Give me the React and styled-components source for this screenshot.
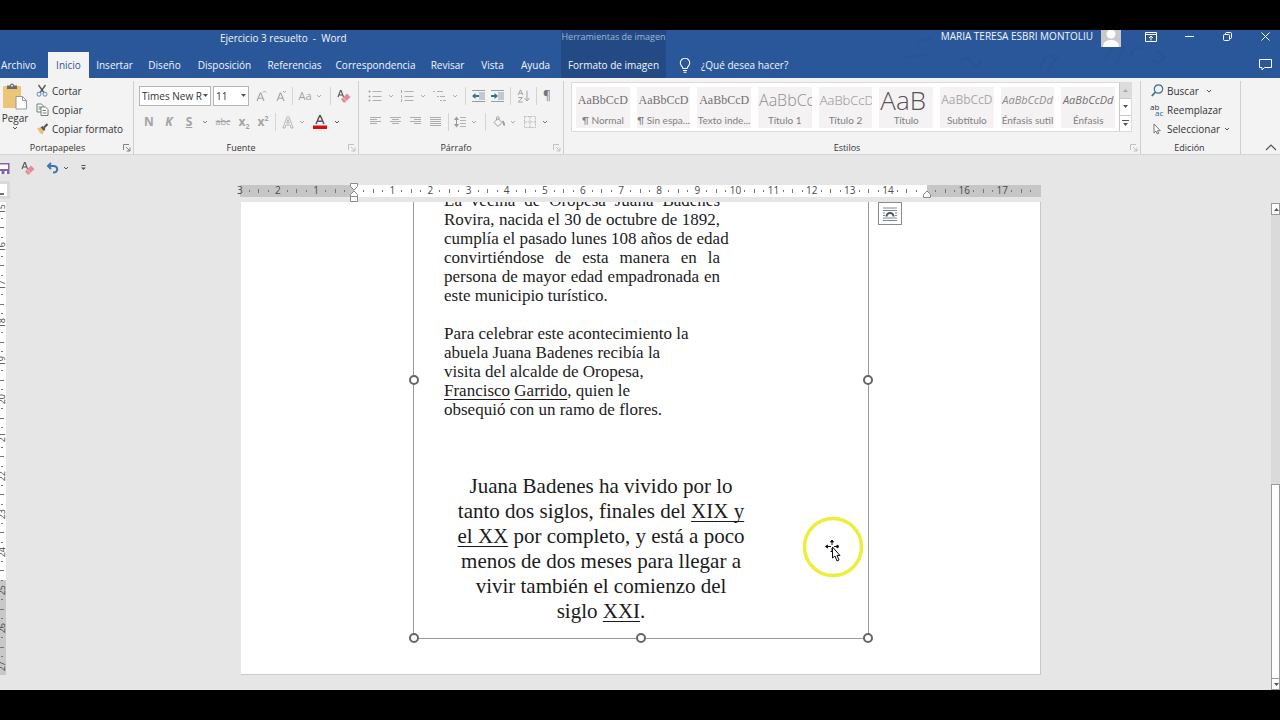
import React from "react";
import styled, { createGlobalStyle, css } from "styled-components";

const GlobalStyle = createGlobalStyle`
  * { box-sizing: border-box; }
  body {
    margin: 0;
    background: #000;
    font-family: "Open Sans", "Noto Sans", sans-serif;
    font-size: 10px;
    line-height: 16px;
    color: #333;
  }
  button, select { font: inherit; color: inherit; }
  button { background: none; border: 0; padding: 0; cursor: pointer; white-space: nowrap; }
  h1, h2, p { margin: 0; font-weight: 400; }
  svg { display: block; flex: none; }
`;

const Screen = styled.div`
  display: flex;
  flex-direction: column;
  min-height: 100vh;
  padding: 30px 0;
  overflow: hidden;
`;

/* ---------- header ---------- */
const Header = styled.header`
  position: relative;
  background: #2a579a;
  color: #f2f6fb;
`;
const Doodle = styled.svg`
  position: absolute;
  top: 0;
  right: 100px;
`;
const TitleRow = styled.div`
  position: relative;
  display: flex;
  height: 22px;
`;
const DocTitle = styled.h1`
  width: 561px;
  padding-left: 220px;
  font-size: 10px;
  line-height: 16px;
  white-space: pre;
`;
const ContextLabel = styled.div`
  width: 105px;
  background: #234a84;
  color: #9fb6d8;
  font-size: 9px;
  line-height: 13px;
  text-align: center;
  white-space: nowrap;
`;
const UserArea = styled.div`
  display: flex;
  align-items: flex-start;
  gap: 8px;
  margin-left: auto;
  line-height: 13px;
`;
const Avatar = styled.svg`
  margin-right: 7px;
`;
const WindowButton = styled.button`
  display: flex;
  justify-content: center;
  align-items: center;
  width: 30px;
  height: 13px;
`;
const TabRow = styled.nav`
  position: relative;
  display: flex;
  align-items: center;
  height: 26px;
`;
const Tab = styled.button`
  width: ${(p) => p.$w}px;
  height: 26px;
  text-align: center;
  margin-right: ${(p) => p.$after || 0}px;
  ${(p) => p.$active && css`background: #f3f3f3; color: #2a579a;`}
  ${(p) => p.$context && css`background: #234a84;`}
`;
const TellMe = styled.button`
  display: flex;
  align-items: center;
  gap: 10px;
  margin-left: 13px;
`;
const CommentButton = styled(WindowButton)`
  margin-left: auto;
  height: 20px;
`;

/* ---------- ribbon ---------- */
const Ribbon = styled.div`
  display: flex;
  height: 77px;
  padding: 3px 0 0;
  background: #f3f3f3;
  border-bottom: 1px solid #d5d5d5;
`;
const Group = styled.section`
  display: flex;
  flex-direction: column;
  ${(p) => (p.$w ? `width: ${p.$w}px;` : "flex: 1; min-width: 0;")}
  margin-left: ${(p) => p.$bleed || 0}px;
  border-right: 1px solid #cfcfcf;
`;
const GroupBody = styled.div`
  display: flex;
  flex: 1;
  padding: ${(p) => p.$pad || "0"};
  flex-direction: ${(p) => (p.$column ? "column" : "row")};
`;
const GroupFoot = styled.div`
  display: flex;
  align-items: center;
  height: 12px;
  padding-right: 2px;
`;
const GroupName = styled.h2`
  flex: 1;
  font-size: 9px;
  line-height: 12px;
  text-align: center;
`;
const Row = styled.div`
  display: flex;
  align-items: center;
  height: ${(p) => p.$h}px;
`;
const Tool = styled.button`
  display: flex;
  justify-content: center;
  align-items: center;
  width: ${(p) => p.$w}px;
  height: 18px;
  color: ${(p) => p.$color || "#a3a3a3"};
  font-size: ${(p) => p.$size || 12}px;
  font-weight: ${(p) => (p.$bold ? 700 : 400)};
  font-style: ${(p) => (p.$italic ? "italic" : "normal")};
  text-decoration: ${(p) => p.$line || "none"};
  & sup, & sub { font-size: 7px; line-height: 0; }
`;
const SepBox = styled.span`
  display: flex;
  justify-content: center;
  width: ${(p) => p.$w}px;
  &::before { content: ""; width: 1px; height: 18px; background: #d4d4d4; }
`;
const PasteButton = styled.button`
  display: flex;
  flex-direction: column;
  align-items: center;
  width: 30px;
  margin-right: 6px;
  padding-top: 2px;
`;
const Command = styled.button`
  display: flex;
  align-items: center;
  gap: 4px;
  height: 19px;
`;
const CommandList = styled.div`
  display: flex;
  flex-direction: column;
  align-items: flex-start;
`;
const IconBox = styled.span`
  display: flex;
  justify-content: center;
  width: 12px;
`;
const CaretGap = styled.span`
  margin-left: ${(p) => p.$gap}px;
`;
const SelectBox = styled.label`
  position: relative;
  width: ${(p) => p.$w}px;
  height: 20px;
  margin-right: 2px;
  & select {
    width: 100%;
    height: 20px;
    padding: 0 0 0 2px;
    appearance: none;
    background: #fff;
    border: 1px solid #b5b5b5;
    border-radius: 0;
  }
  & svg { position: absolute; right: 3px; top: 8px; }
`;

/* ---------- styles gallery ---------- */
const Gallery = styled.div`
  display: flex;
  flex: 1;
  min-width: 0;
  height: 50px;
  background: #fff;
  border: 1px solid #dcdcdc;
`;
const Cards = styled.div`
  display: flex;
  flex: 1;
  min-width: 0;
  gap: 7px;
  padding: 4px;
`;
const Card = styled.button`
  display: flex;
  flex-direction: column;
  flex: 1 1 0;
  min-width: 0;
  height: 41px;
  overflow: hidden;
  background: #f5f2f4;
`;
const Sample = styled.span`
  display: flex;
  justify-content: ${(p) => (p.$wide ? "flex-start" : "center")};
  align-items: center;
  width: 100%;
  height: 26px;
  padding-left: ${(p) => (p.$wide ? 1 : 0)}px;
  overflow: hidden;
  font-family: ${(p) => (p.$serif ? '"Liberation Serif", serif' : '"Open Sans", sans-serif')};
  font-size: ${(p) => p.$size}px;
  font-weight: ${(p) => (p.$light ? 300 : 400)};
  font-style: ${(p) => (p.$italic ? "italic" : "normal")};
  line-height: 26px;
  color: ${(p) => p.$color || "#707070"};
`;
const CardName = styled.span`
  width: 100%;
  height: 15px;
  font-family: Lato, sans-serif;
  line-height: 15px;
  text-align: center;
  color: #808080;
`;
const GalleryNav = styled.div`
  display: flex;
  flex-direction: column;
  width: 12px;
  border-left: 1px solid #c9c9c9;
`;
const GalleryButton = styled.button`
  display: flex;
  flex: 1;
  justify-content: center;
  align-items: center;
  background: ${(p) => (p.$off ? "#dcdcdc" : "#fff")};
  & + & { border-top: 1px solid #c9c9c9; }
`;
const RibbonEnd = styled.div`
  display: flex;
  justify-content: flex-end;
  align-items: flex-end;
  width: 39px;
  padding: 0 3px 3px 0;
`;

/* ---------- workspace ---------- */
const Workspace = styled.main`
  display: flex;
  flex-direction: column;
  flex: 1;
  background: #e6e6e6;
`;
const QuickAccess = styled.div`
  display: flex;
  align-items: center;
  height: 26px;
`;
const Body = styled.div`
  display: flex;
  flex: 1;
`;
const Rail = styled.div`
  width: 10px;
`;
const TabSelector = styled.button`
  display: block;
  width: 10px;
  height: 18px;
  margin-bottom: 3px;
  background: #fff;
  border: 3px solid #d9d9d9;
  border-left: 0;
`;
const VRuler = styled.div`
  display: flex;
  flex-direction: column;
  width: 6px;
  height: 473px;
  padding: 2px 0 4px;
  overflow: hidden;
  background: linear-gradient(#fff 80%, #c8c8c8 80%);
`;
const VSlot = styled.span`
  display: flex;
  flex: 1 1 0;
  justify-content: flex-end;
  align-items: center;
  min-height: 0;
  padding-right: ${(p) => (p.$num ? 0 : p.$tick ? 2 : 3)}px;
  font-size: 9px;
  line-height: 8px;
  color: #444;
  & > b { font-weight: 400; writing-mode: vertical-rl; transform: rotate(180deg); }
  & > i { width: ${(p) => (p.$tick ? 4 : 2)}px; height: 1px; background: #777; }
`;
const Center = styled.div`
  display: flex;
  flex-direction: column;
  align-items: center;
  flex: 1;
  padding-top: 4px;
`;
const HRuler = styled.div`
  position: relative;
  display: flex;
  width: 801px;
  height: 12px;
  margin-bottom: 5px;
  background: linear-gradient(90deg, #c6c6c6 14.28%, #fff 14.28%, #fff 85.72%, #c6c6c6 85.72%);
`;
const Scale = styled.div`
  display: flex;
  width: 100%;
  margin: 0 5px 0 -5px;
  padding-bottom: 1px;
  flex: none;
`;
const HSlot = styled.span`
  display: flex;
  flex: 1 1 0;
  justify-content: center;
  align-items: center;
  min-width: 0;
  line-height: 11px;
  color: #4a4a4a;
  & > i { width: 1px; height: ${(p) => (p.$tick ? 4 : 2)}px; background: #777; }
`;
const Marker = styled.svg`
  position: absolute;
  left: ${(p) => p.$at};
  top: ${(p) => p.$top}px;
  transform: translateX(-50%);
`;
const Viewport = styled.div`
  overflow: hidden;
  padding: 0 0 4px 1px;
`;
const Paper = styled.article`
  position: relative;
  width: 800px;
  padding: 0 171px 35px 172px;
  background: #fff;
  border-right: 1px solid #c9c9c9;
  border-bottom: 1px solid #c9c9c9;
`;
const Picture = styled.div`
  position: relative;
  display: flow-root;
  padding: 0 120px 14px 30px;
  border: 1px solid #9a9a9a;
  border-top: 0;
  color: #1b1b1b;
  font-family: "Liberation Serif", serif;
`;
const Handle = styled.button`
  position: absolute;
  left: ${(p) => p.$x};
  top: ${(p) => p.$y};
  width: 10px;
  height: 10px;
  margin: -5px;
  background: #fff;
  border: 2px solid #666;
  border-radius: 50%;
`;
const Story = styled.p`
  width: 276px;
  margin-top: ${(p) => p.$top}px;
  font-size: 17px;
  line-height: 19px;
  white-space: nowrap;
  text-align: left;
`;
const Line = styled.span`
  display: block;
  text-align-last: ${(p) => (p.$fill ? "justify" : "auto")};
`;
const Closing = styled.p`
  width: 314px;
  margin: 55px 0 0;
  font-size: 21px;
  line-height: 25px;
  text-align: center;
  white-space: nowrap;
`;
const Under = styled.span`
  text-decoration: underline 1px;
  text-underline-offset: 3px;
  text-decoration-skip-ink: none;
`;
const LayoutOptions = styled.button`
  position: absolute;
  left: 637px;
  top: 0;
  display: flex;
  justify-content: center;
  align-items: center;
  width: 24px;
  height: 23px;
  background: #fff;
  border: 1px solid #8a8a8a;
`;
const Pointer = styled.svg`
  position: absolute;
  left: 561px;
  top: 314px;
`;
const ScrollBar = styled.div`
  display: flex;
  flex-direction: column;
  width: 9px;
  margin-top: 22px;
  background: #dadada;
`;
const ScrollButton = styled.button`
  display: flex;
  align-items: center;
  justify-content: flex-end;
  height: 12px;
  background: #fff;
  border: 1px solid #999;
  overflow: hidden;
`;
const ScrollThumb = styled.div`
  height: 194px;
  margin-top: auto;
  background: #fff;
  border: 1px solid #999;
  border-bottom: 0;
`;

/* ---------- icons ---------- */
const Caret = ({ c = "#555" }) => (
  <svg width="6" height="4" viewBox="0 0 6 4"><path d="M1 1l2 2 2-2" fill="none" stroke={c} /></svg>
);
const Solid = ({ up, c = "#555" }) => (
  <svg width="5" height="3" viewBox="0 0 5 3"><path d={up ? "M0 3h5L2.500 0z" : "M0 0h5L2.500 3z"} fill={c} /></svg>
);
const Launcher = ({ c = "#777" }) => (
  <svg width="8" height="8" viewBox="0 0 8 8" fill="none" stroke={c} strokeWidth=".8"><path d="M.5 6V.5H6M3 3l4 4M7 3.500V7H3.500" /></svg>
);
const GrowA = ({ down }) => (
  <svg width="11" height="12" viewBox="0 0 11 12" fill="none" stroke="#a3a3a3">
    <path d="M1 11l3.200-8h.6L8 11M2.200 8.300h4.600" strokeWidth="1.100" /><path d={down ? "M7 1l1.500 1.500L10 1" : "M7 2.500L8.500 1 10 2.500"} />
  </svg>
);
const Eraser = () => (
  <svg width="14" height="14" viewBox="0 0 14 14">
    <path d="M1 8L3.500 1.500h.6L6.500 8M2 6h3.500" fill="none" stroke="#555" strokeWidth="1.100" />
    <path d="M4 10.500l6-6L13.500 8 8 13.500H6.500z" fill="#e58a9b" />
    <path d="M6 8.500l3.500 3.500" stroke="#f6cdd4" strokeWidth=".8" />
  </svg>
);
const Paste = () => (
  <svg width="26" height="27" viewBox="0 0 26 27">
    <rect x="1" y="3" width="18" height="22" rx="1" fill="#ecc678" />
    <path d="M5 2.500h3a2 2 0 014 0h3V6H5z" fill="#6b6b6b" /><circle cx="10" cy="2.800" r="1" fill="#eee" />
    <path d="M14 13.500h6.500l4 4V26H14z" fill="#fff" stroke="#999" /><path d="M20.500 13.500v4h4" fill="none" stroke="#999" />
  </svg>
);
const Cut = () => (
  <svg width="12" height="13" viewBox="0 0 12 13" fill="none">
    <path d="M2.500 1l5.300 7.500M9.500 1L4.200 8.500" stroke="#555" strokeWidth="1.300" />
    <circle cx="3" cy="10.200" r="2" stroke="#5b87b8" /><circle cx="9" cy="10.200" r="2" stroke="#5b87b8" />
  </svg>
);
const Copy = () => (
  <svg width="13" height="13" viewBox="0 0 13 13" fill="#fff" stroke="#6f8078">
    <path d="M1 1h4.500L8 3.500V9H1z" /><path d="M2.500 4h3M2.500 6h3" />
    <path d="M5 4h4.500L12 6.500v6H5z" /><path d="M6.500 7.500h3.500M6.500 10h4" />
  </svg>
);
const Brush = () => (
  <svg width="12" height="12" viewBox="0 0 12 12">
    <path d="M1 5l3.500-.5L8 8l-1.500 3.500L4 10z" fill="#edc06b" /><path d="M4.500 4.500l2-1.500 3 3-1.500 2z" fill="#555" /><path d="M8 4.500L11.500 1" stroke="#555" strokeWidth="2" />
  </svg>
);
const List = ({ kind }) => (
  <svg width="14" height="12" viewBox="0 0 14 12" stroke="#b0b0b0" fill="#a0a0a0">
    {[1.5, 6.5, 10.5].map((y, i) => (
      <g key={y}>
        {kind === "multi" ? (
          <path d={`M${[0, 4, 7][i]} ${y}h2M${[4, 7, 10][i]} ${y}h${[6, 5, 3][i]}`} />
        ) : kind === "num" ? (
          <path d={`M1.500 ${y - 1.5}v3M4.500 ${y}h9`} />
        ) : (
          <><circle cx="1.500" cy={y} r="1" stroke="none" /><path d={`M4.500 ${y}h9`} /></>
        )}
      </g>
    ))}
  </svg>
);
const Indent = ({ out }) => (
  <svg width="13" height="12" viewBox="0 0 13 12">
    <path d="M0 .5h13M7 3h6M7 5h6M7 7h6M7 9h6M0 11.500h13" stroke="#8fa0a6" />
    <path d={out ? "M0 6l3.500-3v2H7v2H3.500v2z" : "M7 6L3.500 3v2H0v2h3.500v2z"} fill="#3d7187" />
  </svg>
);
const Align = ({ rows }) => (
  <svg width="11" height="10" viewBox="0 0 11 10" stroke="#adadad">
    {rows.map(([a, b], i) => <path key={i} d={`M${a} ${i * 2 + 0.5}H${b}`} />)}
  </svg>
);
const Sort = () => (
  <svg width="13" height="14" viewBox="0 0 13 14" fill="none" stroke="#a3a3a3">
    <path d="M1 6L3.500.8 6 6M2 4.300h3M1.200 8.500h4.300L1.200 13h4.600M10 1.500v10M7.500 9l2.500 3 2.500-3" />
  </svg>
);
const Spacing = () => (
  <svg width="12" height="12" viewBox="0 0 12 12">
    <path d="M2.500 1v10" stroke="#999" /><path d="M0 4l2.500-3.500L5 4zM0 8l2.500 3.500L5 8z" fill="#999" />
    <path d="M6 1.500h6M6 4.500h6M6 7.500h6M6 10.500h6" stroke="#b3b3b3" />
  </svg>
);
const Bucket = () => (
  <svg width="12" height="12" viewBox="0 0 12 12" fill="none" stroke="#9e9e9e">
    <path d="M1 6.500l4-4 4 4-4 4zM3.500 4V1.500a1.300 1.300 0 012.500 0V4" /><path d="M9.500 5c1.500 2 2 3 1.300 4.500" strokeWidth="2" />
  </svg>
);
const Borders = () => (
  <svg width="12" height="12" viewBox="0 0 12 12" fill="none" stroke="#bbb"><path d="M.5.5h11v11H.5zM6 .5v11M.5 6h11" strokeDasharray="2 1" /></svg>
);
const OutlineA = () => (
  <svg width="12" height="13" viewBox="0 0 12 13" fill="none" stroke="#b0b0b0" strokeWidth=".9"><path d="M.8 12L5 1h2l4.200 11H9L8 9H4l-1 3zM4.700 7h2.600L6 3.500z" /></svg>
);
const Search = () => (
  <svg width="13" height="13" viewBox="0 0 13 13" fill="none" stroke="#3b6c9e"><circle cx="7.500" cy="5" r="4.200" strokeWidth="1.200" /><path d="M4.500 8L.8 12" strokeWidth="1.800" /></svg>
);
const Arrow = () => (
  <svg width="8" height="12" viewBox="0 0 8 12" fill="#fff" stroke="#777"><path d="M1 1v9l2-1.800L4.300 11l1.400-.6-1.200-2.700H7.300z" /></svg>
);
const ReplaceIcon = styled.span`
  display: flex;
  flex-direction: column;
  width: 14px;
  margin: 0 -1px;
  font-size: 8px;
  line-height: 6px;
  text-align: left;
  & > b { padding-left: 5px; font-weight: 400; color: #33658f; }
`;

const ruler = (from, to) => {
  const out = [];
  for (let n = from; n < to; n += 1) out.push(String(Math.abs(n)), "dot", "tick", "dot");
  return out;
};
const horizontal = ruler(-3, 18).map((s) => (s === "0" || s === "15" ? "" : s));
const vertical = ruler(15, 28).slice(0, 49);

const tabs = [
  ["Archivo", 37, 11], ["Inicio", 41], ["Insertar", 51], ["Diseño", 49], ["Disposición", 71],
  ["Referencias", 69], ["Correspondencia", 93], ["Revisar", 51], ["Vista", 39], ["Ayuda", 47, 2],
  ["Formato de imagen", 105],
];

const styles = [
  ["¶ Normal", "AaBbCcD", { $serif: true, $size: 12 }],
  ["¶ Sin espa...", "AaBbCcD", { $serif: true, $size: 12 }],
  ["Texto inde...", "AaBbCcD", { $serif: true, $size: 12 }],
  ["Título 1", "AaBbCc", { $size: 16, $light: true, $wide: true, $color: "#8f8f8f" }],
  ["Título 2", "AaBbCcD", { $size: 13, $light: true, $wide: true, $color: "#8f8f8f" }],
  ["Título", "AaB", { $size: 26, $light: true, $wide: true, $color: "#555" }],
  ["Subtítulo", "AaBbCcD", { $size: 12, $color: "#aaa" }],
  ["Énfasis sutil", "AaBbCcDd", { $size: 11, $italic: true, $color: "#8d8d8d" }],
  ["Énfasis", "AaBbCcDd", { $size: 11, $italic: true, $color: "#707070" }],
];

const handles = [["0%", "178px"], ["100%", "178px"], ["0%", "100%"], ["50%", "100%"], ["100%", "100%"]];

const Foot = ({ name, dialog, dim }) => (
  <GroupFoot>
    <GroupName>{name}</GroupName>
    {dialog && <button aria-label={`Opciones de ${name}`}><Launcher c={dim ? "#b5b5b5" : "#666"} /></button>}
  </GroupFoot>
);

export default function App() {
  return (
    <Screen>
      <GlobalStyle />
      <Header>
        <Doodle width="300" height="48" viewBox="0 0 300 48" fill="none" stroke="#234e8c" strokeOpacity=".3" strokeWidth="2" aria-hidden="true">
          <path d="M38 12l14-5M25 28l22-4M80 32q6-8 12 0t10-2M160 38q4-14 14-12M168 40l10-14M225 30l8-14M236 34l8-18M250 26q6-12 16-6M276 20l10 8M272 30q8 6 14-4" />
        </Doodle>
        <TitleRow>
          <DocTitle>Ejercicio 3 resuelto  -  Word</DocTitle>
          <ContextLabel>Herramientas de imagen</ContextLabel>
          <UserArea>
            <span>MARIA TERESA ESBRI MONTOLIU</span>
            <Avatar width="20" height="17" viewBox="0 0 20 17">
              <path fill="#c9c9c9" d="M0 0h20v17H0z" /><circle cx="10" cy="4" r="4.500" fill="#fff" /><path d="M2 17c0-5 3-7 8-7s8 2 8 7z" fill="#fff" />
            </Avatar>
            <WindowButton aria-label="Opciones de la cinta">
              <svg width="12" height="10" viewBox="0 0 12 10" fill="none" stroke="#fff"><path d="M.5.5h11v9H.5zM.5 2.500h11M6 8.500V4.500M4 6l2-2 2 2" /></svg>
            </WindowButton>
            <WindowButton aria-label="Minimizar"><svg width="9" height="2" viewBox="0 0 9 2"><path d="M0 .5h9" stroke="#fff" /></svg></WindowButton>
            <WindowButton aria-label="Restaurar">
              <svg width="9" height="9" viewBox="0 0 9 9" fill="none" stroke="#fff"><rect x=".5" y="2.500" width="6" height="6" rx="1" /><path d="M2.500 2.500v-1q0-1 1-1h4q1 0 1 1v4q0 1-1 1h-1" /></svg>
            </WindowButton>
            <WindowButton aria-label="Cerrar"><svg width="9" height="9" viewBox="0 0 9 9"><path d="M.5.5l8 8M8.500.5l-8 8" stroke="#fff" /></svg></WindowButton>
          </UserArea>
        </TitleRow>
        <TabRow>
          {tabs.map(([t, w, after], i) => (
            <Tab key={t} $w={w} $after={after} $active={i === 1} $context={i === 10}>{t}</Tab>
          ))}
          <TellMe>
            <svg width="12" height="15" viewBox="0 0 12 15" fill="none" stroke="#fff" strokeWidth="1.100"><path d="M4 10.500C4 8.500 1.300 8 1.300 5a4.700 4.700 0 019.400 0c0 3-2.700 3.500-2.700 5.500zM4 12.500h4M4.500 14.200h3" /></svg>
            ¿Qué desea hacer?
          </TellMe>
          <CommentButton aria-label="Comentarios">
            <svg width="13" height="12" viewBox="0 0 13 12" fill="none" stroke="#fff"><path d="M.5.5h12v8H5.500L3 11V8.500H.5z" /></svg>
          </CommentButton>
        </TabRow>
      </Header>

      <Ribbon>
        <Group $w={142} $bleed={-8}>
          <GroupBody $pad="0 0 0 8px">
            <PasteButton><Paste />Pegar<Caret /></PasteButton>
            <CommandList>
              <Command><IconBox><Cut /></IconBox>Cortar</Command>
              <Command><IconBox><Copy /></IconBox>Copiar</Command>
              <Command><IconBox><Brush /></IconBox>Copiar formato</Command>
            </CommandList>
          </GroupBody>
          <Foot name="Portapapeles" dialog />
        </Group>

        <Group $w={225}>
          <GroupBody $column $pad="2px 0 0 5px">
            <Row $h={26}>
              <SelectBox $w={72}>
                <select aria-label="Fuente" defaultValue="t"><option value="t">Times New R</option></select><Solid />
              </SelectBox>
              <SelectBox $w={36}>
                <select aria-label="Tamaño de fuente" defaultValue="11"><option>11</option></select><Solid />
              </SelectBox>
              <Tool $w={20} aria-label="Aumentar tamaño"><GrowA /></Tool>
              <Tool $w={20} aria-label="Disminuir tamaño"><GrowA down /></Tool>
              <SepBox $w={3} />
              <Tool $w={22} $size={11}>Aa</Tool>
              <Tool $w={6} aria-label="Más opciones de mayúsculas"><Caret c="#b0b0b0" /></Tool>
              <SepBox $w={16} />
              <Tool $w={12} aria-label="Borrar formato"><Eraser /></Tool>
            </Row>
            <Row $h={26}>
              <Tool $w={20} $bold>N</Tool>
              <Tool $w={20} $bold $italic>K</Tool>
              <Tool $w={20} $bold $line="underline">S</Tool>
              <Tool $w={12} aria-label="Tipos de subrayado"><Caret c="#888" /></Tool>
              <Tool $w={24} $size={9} $line="line-through">abc</Tool>
              <Tool $w={18} $bold><span>x<sub>2</sub></span></Tool>
              <Tool $w={20} $bold><span>x<sup>2</sup></span></Tool>
              <SepBox $w={5} />
              <Tool $w={20} aria-label="Efectos de texto"><OutlineA /></Tool>
              <Tool $w={8} aria-label="Más efectos"><Caret c="#b0b0b0" /></Tool>
              <Tool $w={28} aria-label="Color de fuente">
                <svg width="14" height="14" viewBox="0 0 14 14"><path d="M3 9L6.600.8h.8L11 9M4.500 6.300h5" fill="none" stroke="#555" strokeWidth="1.500" /><path d="M0 10.500h14V14H0z" fill="#d90b10" /></svg>
              </Tool>
              <Tool $w={6} aria-label="Más colores"><Caret /></Tool>
            </Row>
          </GroupBody>
          <Foot name="Fuente" dialog dim />
        </Group>

        <Group $w={205}>
          <GroupBody $column $pad="2px 0 0 6px">
            <Row $h={26}>
              <Tool $w={20} aria-label="Viñetas"><List /></Tool>
              <Tool $w={12} aria-label="Más viñetas"><Caret c="#b0b0b0" /></Tool>
              <Tool $w={20} aria-label="Numeración"><List kind="num" /></Tool>
              <Tool $w={12} aria-label="Más numeración"><Caret c="#b0b0b0" /></Tool>
              <Tool $w={22} aria-label="Lista multinivel"><List kind="multi" /></Tool>
              <Tool $w={8} aria-label="Más niveles"><Caret c="#b0b0b0" /></Tool>
              <SepBox $w={12} />
              <Tool $w={14} aria-label="Disminuir sangría"><Indent out /></Tool>
              <Tool $w={24} aria-label="Aumentar sangría"><Indent /></Tool>
              <SepBox $w={2} />
              <Tool $w={24} aria-label="Ordenar"><Sort /></Tool>
              <SepBox $w={2} />
              <Tool $w={20} $color="#777">¶</Tool>
            </Row>
            <Row $h={26}>
              <Tool $w={20} aria-label="Izquierda"><Align rows={[[0, 11], [0, 7], [0, 11], [0, 7]]} /></Tool>
              <Tool $w={20} aria-label="Centrar"><Align rows={[[0, 11], [2, 9], [0, 11], [2, 9]]} /></Tool>
              <Tool $w={20} aria-label="Derecha"><Align rows={[[0, 11], [4, 11], [0, 11], [4, 11]]} /></Tool>
              <Tool $w={20} aria-label="Justificar"><Align rows={[[0, 11], [0, 11], [0, 11], [0, 11], [0, 11]]} /></Tool>
              <SepBox $w={6} />
              <Tool $w={18} aria-label="Espaciado"><Spacing /></Tool>
              <Tool $w={10} aria-label="Más espaciado"><Caret c="#b0b0b0" /></Tool>
              <SepBox $w={12} />
              <Tool $w={16} aria-label="Sombreado"><Bucket /></Tool>
              <Tool $w={12} aria-label="Más sombreado"><Caret c="#b0b0b0" /></Tool>
              <Tool $w={22} aria-label="Bordes"><Borders /></Tool>
              <Tool $w={8} aria-label="Más bordes"><Caret c="#777" /></Tool>
            </Row>
          </GroupBody>
          <Foot name="Párrafo" dialog dim />
        </Group>

        <Group>
          <GroupBody $pad="1px 8px 0 7px">
            <Gallery>
              <Cards>
                {styles.map(([name, sample, look]) => (
                  <Card key={name}><Sample {...look}>{sample}</Sample><CardName>{name}</CardName></Card>
                ))}
              </Cards>
              <GalleryNav>
                <GalleryButton $off aria-label="Anterior"><Solid up c="#aaa" /></GalleryButton>
                <GalleryButton aria-label="Siguiente"><Solid /></GalleryButton>
                <GalleryButton aria-label="Más estilos">
                  <svg width="7" height="7" viewBox="0 0 7 7"><path d="M0 .5h7" stroke="#555" /><path d="M1 3h5L3.500 6z" fill="#555" /></svg>
                </GalleryButton>
              </GalleryNav>
            </Gallery>
          </GroupBody>
          <Foot name="Estilos" dialog dim />
        </Group>

        <Group $w={100}>
          <GroupBody $pad="0 0 0 10px">
            <CommandList>
              <Command><IconBox><Search /></IconBox>Buscar<CaretGap $gap={3}><Caret /></CaretGap></Command>
              <Command><ReplaceIcon aria-hidden="true"><span>ab</span><b>ac</b></ReplaceIcon>Reemplazar</Command>
              <Command><IconBox><Arrow /></IconBox>Seleccionar<Caret /></Command>
            </CommandList>
          </GroupBody>
          <Foot name="Edición" />
        </Group>
        <RibbonEnd>
          <button aria-label="Contraer la cinta"><svg width="12" height="7" viewBox="0 0 12 7"><path d="M1 6l5-5 5 5" fill="none" stroke="#555" strokeWidth="1.200" /></svg></button>
        </RibbonEnd>
      </Ribbon>

      <Workspace>
        <QuickAccess>
          <Tool $w={10} aria-label="Guardar">
            <svg width="10" height="11" viewBox="0 0 10 11"><path d="M0 0h9.500v11H0z" fill="#8464a8" /><path d="M0 1.500h8V6H0zM0 8h1.500v3H0zM4.500 8H7v3H4.500z" fill="#fff" /></svg>
          </Tool>
          <Tool $w={36} aria-label="Borrar formato"><Eraser /></Tool>
          <Tool $w={12} aria-label="Deshacer">
            <svg width="13" height="12" viewBox="0 0 13 12" fill="none" stroke="#3f75ae" strokeWidth="2"><path d="M5 1L2 4l3 3M2 4h5.500c5 0 5 6.500-.5 6.500" /></svg>
          </Tool>
          <Tool $w={16} aria-label="Más acciones"><Caret /></Tool>
          <Tool $w={18} aria-label="Personalizar">
            <svg width="5" height="6" viewBox="0 0 5 6"><path d="M.5.5h4" stroke="#555" /><path d="M0 2.500h5L2.500 5z" fill="#555" /></svg>
          </Tool>
        </QuickAccess>
        <Body>
          <Rail>
            <TabSelector aria-label="Tipo de tabulación">
              <svg width="4" height="11" viewBox="0 0 4 11"><path d="M0 9h4" stroke="#444" strokeWidth="1.500" /></svg>
            </TabSelector>
            <VRuler>
              {vertical.map((s, i) => (
                <VSlot key={i} $num={s !== "dot" && s !== "tick"} $tick={s === "tick"}>
                  {s === "dot" || s === "tick" ? <i /> : <b>{s}</b>}
                </VSlot>
              ))}
            </VRuler>
          </Rail>
          <Center>
            <HRuler>
              <Scale>
                {horizontal.map((s, i) => (
                  <HSlot key={i} $tick={s === "tick"}>{s === "dot" || s === "tick" ? <i /> : s}</HSlot>
                ))}
              </Scale>
              <Marker $at="14.28%" $top={-2} width="9" height="20" viewBox="0 0 9 20" fill="#fff" stroke="#8a8a8a">
                <path d="M1 .5h7v3L4.500 7 1 3.500zM4.500 8L8 11.500v2H1v-2zM1 13.500h7v5H1z" />
              </Marker>
              <Marker $at="85.72%" $top={5} width="9" height="9" viewBox="0 0 9 9" fill="#fff" stroke="#8a8a8a">
                <path d="M4.500 1L8 4.500v3H1v-3z" />
              </Marker>
            </HRuler>
            <Viewport>
              <Paper>
                <Picture>
                  <Story $top={-11}>
                    <Line $fill>La vecina de Oropesa Juana Badenes</Line>
                    <Line $fill>Rovira, nacida el 30 de octubre de 1892,</Line>
                    <Line $fill>cumplía el pasado lunes 108 años de edad</Line>
                    <Line $fill>convirtiéndose de esta manera en la</Line>
                    <Line $fill>persona de mayor edad empadronada en</Line>
                    <Line>este municipio turístico.</Line>
                  </Story>
                  <Story $top={19}>
                    <Line>Para celebrar este acontecimiento la</Line>
                    <Line>abuela Juana Badenes recibía la</Line>
                    <Line>visita del alcalde de Oropesa,</Line>
                    <Line><Under>Francisco</Under> <Under>Garrido</Under>, quien le</Line>
                    <Line>obsequió con un ramo de flores.</Line>
                  </Story>
                  <Closing>
                    <Line>Juana Badenes ha vivido por lo</Line>
                    <Line>tanto dos siglos, finales del <Under>XIX y</Under></Line>
                    <Line><Under>el XX</Under> por completo, y está a poco</Line>
                    <Line>menos de dos meses para llegar a</Line>
                    <Line>vivir también el comienzo del</Line>
                    <Line>siglo <Under>XXI</Under>.</Line>
                  </Closing>
                  {handles.map(([x, y]) => <Handle key={x + y} $x={x} $y={y} aria-label="Cambiar tamaño" />)}
                </Picture>
                <LayoutOptions aria-label="Opciones de diseño">
                  <svg width="14" height="14" viewBox="0 0 14 14" fill="none">
                    <path d="M0 1h14M0 3.500h14M0 6h2M12 6h2M0 8.500h2M12 8.500h2M0 11h14M0 13.500h14" stroke="#7b8794" />
                    <path d="M3.500 9.500a3.500 3.500 0 017 0" stroke="#555" strokeWidth="2" />
                  </svg>
                </LayoutOptions>
                <Pointer width="62" height="62" viewBox="0 0 62 62" fill="none" aria-hidden="true">
                  <circle cx="31" cy="31" r="28.500" stroke="#edee3c" strokeWidth="3.500" />
                  <path d="M30 24l1.500 2h-3zM23.500 30.500l2-1.500v3zM37 30.500l-2-1.500v3zM29 30.500h-4M32 30.500h4M30 25v4M30 32v4M28.500 35.500h3" fill="#111" stroke="#111" />
                  <path d="M30.500 31v11l2.500-2 2 5 2-1-2-4.500h3z" fill="#fff" stroke="#111" />
                </Pointer>
              </Paper>
            </Viewport>
          </Center>
          <ScrollBar>
            <ScrollButton aria-label="Subir"><Solid up /></ScrollButton>
            <ScrollThumb />
            <ScrollButton aria-label="Bajar"><Solid /></ScrollButton>
          </ScrollBar>
        </Body>
      </Workspace>
    </Screen>
  );
}
